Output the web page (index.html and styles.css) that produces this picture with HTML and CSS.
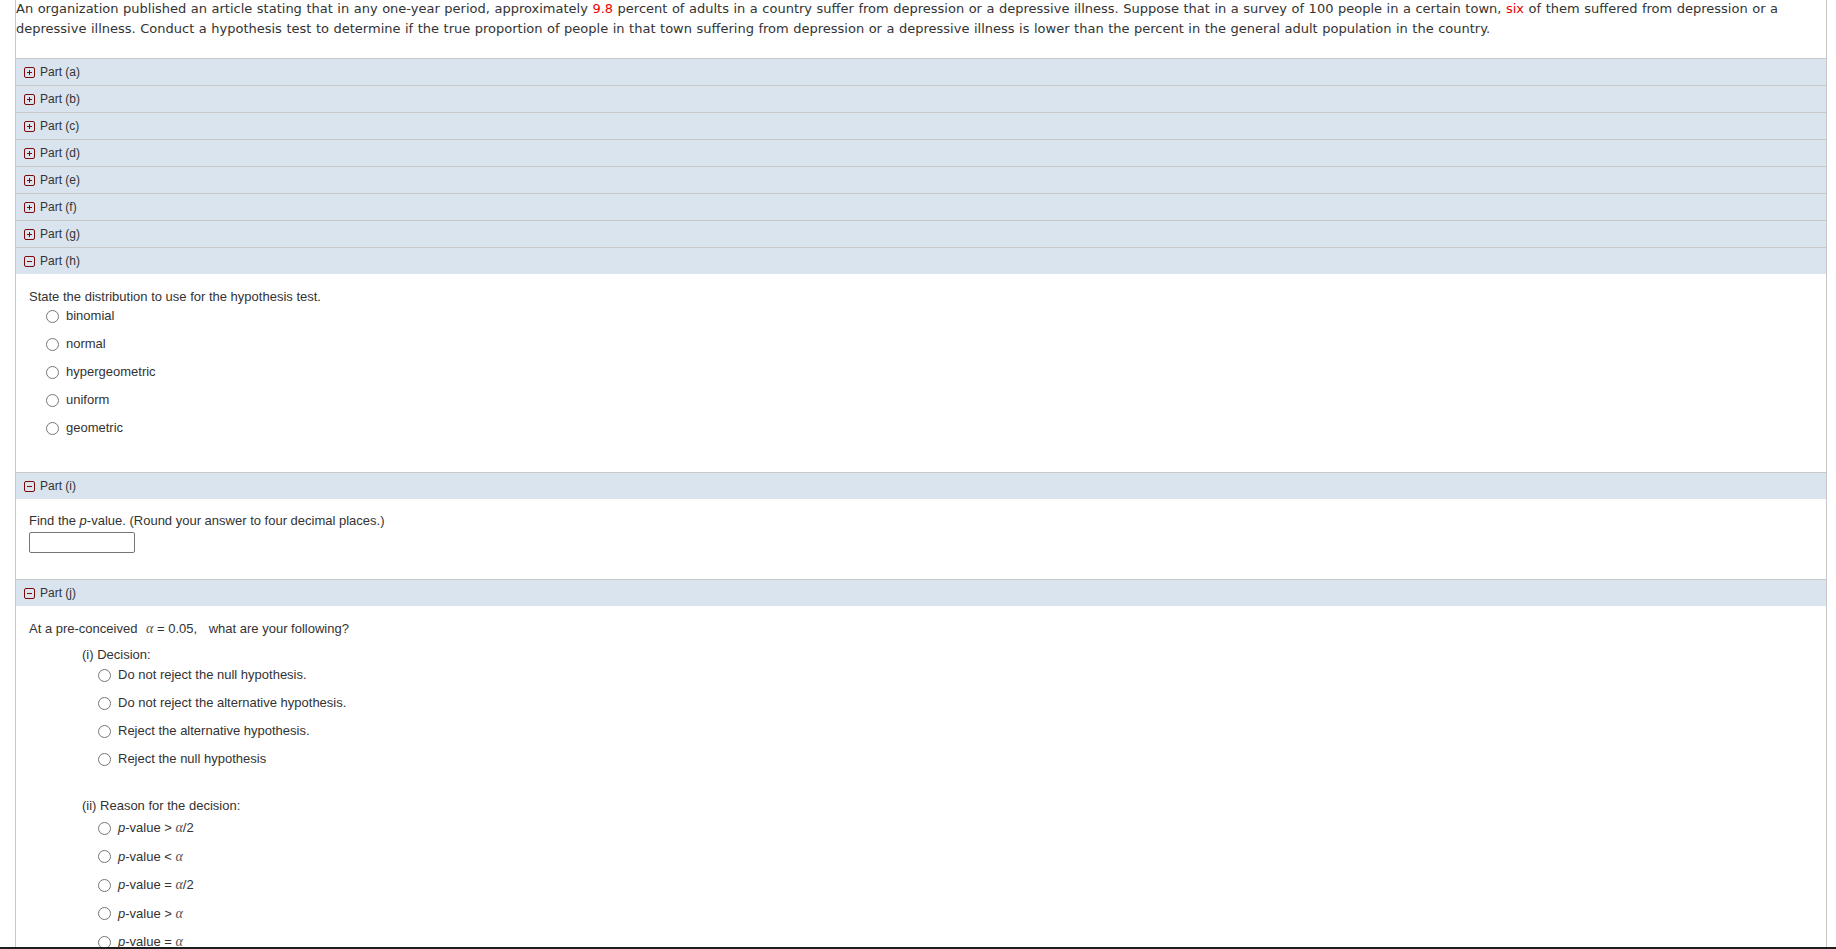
FILE: index.html
```html
<!DOCTYPE html>
<html lang="en">
<head>
  <meta charset="UTF-8">
  <meta name="viewport" content="width=device-width, initial-scale=1.0">
  <title>Hypothesis Test - Depression Survey</title>
  <link rel="stylesheet" href="styles.css">
</head>
<body>
  <div class="page">
    <p class="question">An organization published an article stating that in any one-year period, approximately <span class="hl">9.8</span> percent of adults in a country suffer from depression or a depressive illness. Suppose that in a survey of 100 people in a certain town, <span class="hl">six</span> of them suffered from depression or a depressive illness. Conduct a hypothesis test to determine if the true proportion of people in that town suffering from depression or a depressive illness is lower than the percent in the general adult population in the country.</p>

    <div class="parts">
      <div class="part-head">
        <svg class="toggle" width="11" height="11" viewBox="0 0 11 11"><rect x="0.5" y="0.5" width="10" height="10" rx="1.5" fill="none" stroke="#7d0a0a"/><path d="M3 5.5h5M5.5 3v5" stroke="#7d0a0a"/></svg>
        <span>Part (a)</span>
      </div>
      <div class="part-head">
        <svg class="toggle" width="11" height="11" viewBox="0 0 11 11"><rect x="0.5" y="0.5" width="10" height="10" rx="1.5" fill="none" stroke="#7d0a0a"/><path d="M3 5.5h5M5.5 3v5" stroke="#7d0a0a"/></svg>
        <span>Part (b)</span>
      </div>
      <div class="part-head">
        <svg class="toggle" width="11" height="11" viewBox="0 0 11 11"><rect x="0.5" y="0.5" width="10" height="10" rx="1.5" fill="none" stroke="#7d0a0a"/><path d="M3 5.5h5M5.5 3v5" stroke="#7d0a0a"/></svg>
        <span>Part (c)</span>
      </div>
      <div class="part-head">
        <svg class="toggle" width="11" height="11" viewBox="0 0 11 11"><rect x="0.5" y="0.5" width="10" height="10" rx="1.5" fill="none" stroke="#7d0a0a"/><path d="M3 5.5h5M5.5 3v5" stroke="#7d0a0a"/></svg>
        <span>Part (d)</span>
      </div>
      <div class="part-head">
        <svg class="toggle" width="11" height="11" viewBox="0 0 11 11"><rect x="0.5" y="0.5" width="10" height="10" rx="1.5" fill="none" stroke="#7d0a0a"/><path d="M3 5.5h5M5.5 3v5" stroke="#7d0a0a"/></svg>
        <span>Part (e)</span>
      </div>
      <div class="part-head">
        <svg class="toggle" width="11" height="11" viewBox="0 0 11 11"><rect x="0.5" y="0.5" width="10" height="10" rx="1.5" fill="none" stroke="#7d0a0a"/><path d="M3 5.5h5M5.5 3v5" stroke="#7d0a0a"/></svg>
        <span>Part (f)</span>
      </div>
      <div class="part-head">
        <svg class="toggle" width="11" height="11" viewBox="0 0 11 11"><rect x="0.5" y="0.5" width="10" height="10" rx="1.5" fill="none" stroke="#7d0a0a"/><path d="M3 5.5h5M5.5 3v5" stroke="#7d0a0a"/></svg>
        <span>Part (g)</span>
      </div>

      <!-- open parts -->
      <div class="part-head">
        <svg class="toggle" width="11" height="11" viewBox="0 0 11 11"><rect x="0.5" y="0.5" width="10" height="10" rx="1.5" fill="none" stroke="#7d0a0a"/><path d="M3 5.5h5" stroke="#7d0a0a"/></svg>
        <span>Part (h)</span>
      </div>
      <div class="part-body">
        <div class="line">State the distribution to use for the hypothesis test.</div>
        <ul class="choices">
          <li><input type="radio" name="dist"><span>binomial</span></li>
          <li><input type="radio" name="dist"><span>normal</span></li>
          <li><input type="radio" name="dist"><span>hypergeometric</span></li>
          <li><input type="radio" name="dist"><span>uniform</span></li>
          <li><input type="radio" name="dist"><span>geometric</span></li>
        </ul>
      </div>

      <div class="part-head">
        <svg class="toggle" width="11" height="11" viewBox="0 0 11 11"><rect x="0.5" y="0.5" width="10" height="10" rx="1.5" fill="none" stroke="#7d0a0a"/><path d="M3 5.5h5" stroke="#7d0a0a"/></svg>
        <span>Part (i)</span>
      </div>
      <div class="part-body part-find">
        <div class="line">Find the <i>p</i>-value. (Round your answer to four decimal places.)</div>
        <input type="text" class="answer">
      </div>

      <div class="part-head">
        <svg class="toggle" width="11" height="11" viewBox="0 0 11 11"><rect x="0.5" y="0.5" width="10" height="10" rx="1.5" fill="none" stroke="#7d0a0a"/><path d="M3 5.5h5" stroke="#7d0a0a"/></svg>
        <span>Part (j)</span>
      </div>
      <div class="part-body part-last">
        <div class="line">At a pre-conceived <span class="math"><span class="alpha">α</span> = 0.05,</span> what are your following?</div>

        <div class="sub">
          <div class="line">(i) Decision:</div>
          <ul class="choices">
            <li><input type="radio" name="decision"><span>Do not reject the null hypothesis.</span></li>
            <li><input type="radio" name="decision"><span>Do not reject the alternative hypothesis.</span></li>
            <li><input type="radio" name="decision"><span>Reject the alternative hypothesis.</span></li>
            <li><input type="radio" name="decision"><span>Reject the null hypothesis</span></li>
          </ul>
        </div>

        <div class="sub sub-reason">
          <div class="line">(ii) Reason for the decision:</div>
          <ul class="choices">
            <li><input type="radio" name="reason"><span><i>p</i>-value &gt; <span class="alpha">α</span>/2</span></li>
            <li><input type="radio" name="reason"><span><i>p</i>-value &lt; <span class="alpha">α</span></span></li>
            <li><input type="radio" name="reason"><span><i>p</i>-value = <span class="alpha">α</span>/2</span></li>
            <li><input type="radio" name="reason"><span><i>p</i>-value &gt; <span class="alpha">α</span></span></li>
            <li><input type="radio" name="reason"><span><i>p</i>-value = <span class="alpha">α</span></span></li>
          </ul>
        </div>
      </div>
    </div>
  </div>
  <div class="screen-edge"></div>
</body>
</html>
```

FILE: styles.css
```css
body {
  margin: 0;
  background: #fff;
  color: #333;
  font-family: 'Liberation Sans', Arial, sans-serif;
  font-size: 13px;
}

.page {
  margin-left: 15px;
  width: 1810px;
  min-height: 949px;
  border-left: 1px solid #c8c8c8;
  border-right: 1px solid #c8c8c8;
}

.question {
  margin: -1px 0 19px;
  font-family: Verdana, 'DejaVu Sans', sans-serif;
  font-size: 13px;
  line-height: 20px;
  word-spacing: 0.4px;
  color: #333;
}

.hl {
  color: #e00;
}

.part-head {
  display: flex;
  align-items: center;
  height: 26px;
  padding-left: 8px;
  border-top: 1px solid #c8c8c8;
  background: #d9e4ee;
  font-size: 12px;
  color: #333;
}

.toggle {
  margin-right: 5px;
  flex-shrink: 0;
}

.part-body {
  padding: 15px 13px 36px;
  line-height: 16px;
}

.line {
  height: 16px;
}

.choices {
  list-style: none;
  margin: 3px 0 0 17px;
  padding: 0;
  display: flex;
  flex-direction: column;
  gap: 12px;
}

.choices li {
  display: flex;
  align-items: center;
  height: 16px;
}

.choices input {
  width: 13px;
  height: 13px;
  margin: 0 7px 0 0;
}

.part-find {
  padding: 14px 13px 26px;
}

.answer {
  display: block;
  box-sizing: border-box;
  width: 106px;
  height: 21px;
  margin-top: 3px;
  border: 1px solid #767676;
  border-radius: 2px;
  padding: 1px 3px;
  font-size: 13px;
}

.math {
  margin: 0 8px 0 5px;
}

.alpha {
  font-family: 'Liberation Serif', 'Times New Roman', serif;
  font-style: italic;
  font-size: 14px;
  color: #555;
}

.sub {
  margin: 10px 0 0 53px;
}

.sub .choices {
  margin: 4px 0 0 16px;
}

.sub-reason {
  margin-top: 31px;
}

.sub-reason .choices {
  margin-top: 6px;
  gap: 12.5px;
}

.part-last {
  padding-bottom: 40px;
}

.screen-edge {
  position: fixed;
  left: 0;
  right: 0;
  bottom: 0;
  height: 2px;
  background: #1e1e1e;
}
```
